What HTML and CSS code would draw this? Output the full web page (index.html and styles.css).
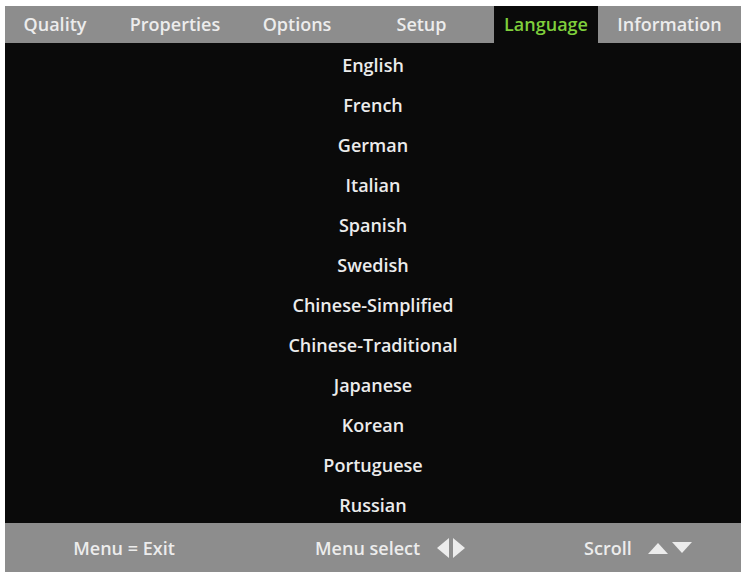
FILE: index.html
```html
<!DOCTYPE html>
<html>
<head>
<meta charset="utf-8">
<link rel="stylesheet" href="styles.css">
</head>
<body>
<div class="osd">
  <div class="tabs">
    <div class="tab t1">Quality</div>
    <div class="tab t2">Properties</div>
    <div class="tab t3">Options</div>
    <div class="tab t4">Setup</div>
    <div class="tab t5 active">Language</div>
    <div class="tab t6">Information</div>
  </div>
  <div class="list">
    <div class="item">English</div>
    <div class="item">French</div>
    <div class="item">German</div>
    <div class="item">Italian</div>
    <div class="item">Spanish</div>
    <div class="item">Swedish</div>
    <div class="item">Chinese-Simplified</div>
    <div class="item">Chinese-Traditional</div>
    <div class="item">Japanese</div>
    <div class="item">Korean</div>
    <div class="item">Portuguese</div>
    <div class="item">Russian</div>
  </div>
  <div class="footer">
    <div class="f1">Menu = Exit</div>
    <div class="f2">Menu select
      <svg class="lr" width="30" height="20" viewBox="0 0 30 20"><polygon points="13,0 13,20 1,10" fill="#ececec"/><polygon points="17,0 17,20 29,10" fill="#ececec"/></svg>
    </div>
    <div class="f3">Scroll
      <svg class="ud" width="44" height="12" viewBox="0 0 44 12"><polygon points="0,12 20,12 10,1" fill="#ececec"/><polygon points="24,0 44,0 34,11" fill="#ececec"/></svg>
    </div>
  </div>
</div>
</body>
</html>
```
FILE: styles.css
```css
html, body {
  margin: 0;
  padding: 0;
  background: #ffffff;
}
body {
  width: 746px;
  height: 576px;
  overflow: hidden;
}
.osd {
  margin: 6px 0 0 5px;
  width: 736px;
  font-family: "Open Sans", "DejaVu Sans", sans-serif;
  font-weight: 600;
  font-size: 18px;
  color: #ececec;
}
.tabs {
  display: flex;
  height: 37px;
  background: #8d8d8d;
}
.tab {
  display: flex;
  align-items: center;
  justify-content: center;
  padding-bottom: 1px;
}
.t1 { width: 100px; }
.t2 { width: 140px; }
.t3 { width: 104px; }
.t4 { width: 145px; }
.t5 { width: 104px; }
.t6 { flex: 1; }
.tab.active {
  background: #0a0a0a;
  color: #7fcf3c;
}
.list {
  background: #0a0a0a;
  height: 480px;
  overflow: hidden;
  padding-top: 2px;
  box-sizing: border-box;
}
.item {
  height: 40px;
  display: flex;
  align-items: center;
  justify-content: center;
}
.footer {
  height: 49px;
  background: #8d8d8d;
  display: flex;
  align-items: center;
}
.f1 {
  width: 238px;
  text-align: center;
}
.f2 {
  margin-left: 72px;
  display: flex;
  align-items: center;
  gap: 16px;
}
.f3 {
  margin-left: 118px;
  display: flex;
  align-items: center;
  gap: 16px;
}
```
